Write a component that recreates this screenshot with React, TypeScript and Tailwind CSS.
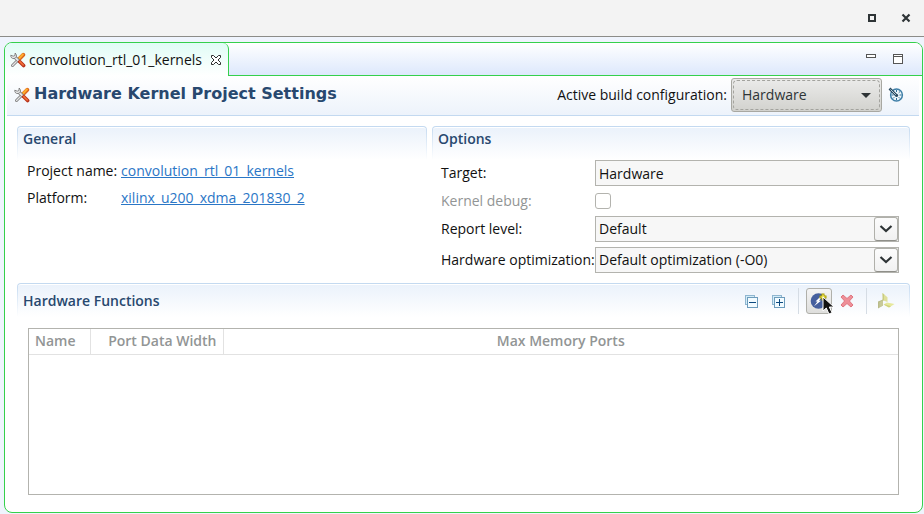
import React from "react";

function ToolsIcon() {
  return (
    <svg width="16" height="16" viewBox="0 0 16 16" className="shrink-0" aria-hidden="true">
      <path d="M2.500 13.500 8.500 7.500" stroke="#7a7a7a" strokeWidth="3" strokeLinecap="round" />
      <path d="M2.500 13.500 8.500 7.500" stroke="#e4e4e4" strokeWidth="1.400" strokeLinecap="round" />
      <path d="M9 7.200 13.200 2.800" stroke="#d9631c" strokeWidth="4" strokeLinecap="round" />
      <path d="M8.800 6.700 12.800 2.500" stroke="#ffac2e" strokeWidth="2.200" strokeLinecap="round" />
      <path d="M4.500 4.800 9.500 9.800" stroke="#7a7a7a" strokeWidth="3.400" />
      <path d="M4.200 4.500 9.500 9.800" stroke="#e6e6e6" strokeWidth="1.900" />
      <path d="M9.800 9.800 13.600 13.600" stroke="#b8321a" strokeWidth="3.600" strokeLinecap="round" />
      <path d="M9.800 9.600 13.200 13" stroke="#f4733a" strokeWidth="1.600" strokeLinecap="round" />
      <path d="M.8 3.200C.6 5.400 2 6.800 4 6.500 6 6.200 6.900 4.500 6.300 2.800L5.200 1 4.900 3.600 3.200 4.200z" fill="#ededed" stroke="#777" strokeWidth=".9" />
    </svg>
  );
}

function TabCloseIcon() {
  return (
    <svg width="12" height="12" viewBox="0 0 12 12" aria-hidden="true">
      <path d="M1.500 1.500h2L6 4l2.500-2.500h2v2L8 6l2.500 2.500v2h-2L6 8l-2.500 2.500h-2v-2L4 6 1.500 3.500z" fill="#fff" stroke="#2c2c2c" />
    </svg>
  );
}

function GaugeIcon() {
  return (
    <svg width="16" height="16" viewBox="0 0 16 16" aria-hidden="true">
      <circle cx="8.500" cy="8" r="5.900" fill="#eef6fa" stroke="#3f7fa8" strokeWidth="1.500" />
      <path d="M8.500 3v2M8.500 11v2M11.500 8h2M3.500 8h2M12 4.500l-1.300 1.300M12 11.500l-1.300-1.300M5 11.500l1.300-1.300" stroke="#2f6f98" />
      <path d="M1.500 1.500 9 9" stroke="#2a4a60" strokeWidth="2.600" />
      <path d="M2.500 2.500 8 8" stroke="#c8dbe6" strokeWidth=".9" />
      <circle cx="8.800" cy="8.600" r="1.400" fill="#2a4a60" />
    </svg>
  );
}

function TreeIcon({ plus }: { plus?: boolean }) {
  return (
    <svg width="13" height="13" viewBox="0 0 13 13" aria-hidden="true" shapeRendering="crispEdges">
      <path d="M.5.500h9v9h-9z" fill="#d3ecf8" stroke="#8fb6d0" />
      <path d="M2.500 2.500h10v10h-10z" fill="#f2fbff" stroke="#6d9cbc" />
      <path d="M4 7.500h7" stroke="#0c4a80" />
      {plus && <path d="M7.500 4v7" stroke="#0c4a80" />}
    </svg>
  );
}

function AddFunctionIcon() {
  return (
    <svg width="18" height="18" viewBox="0 0 18 18" aria-hidden="true">
      <circle cx="8.500" cy="9" r="7.800" fill="#455f9e" />
      <path d="M10.500 4.500 5.500 9.500h2L4 14.300 11 8.700H9L12 5z" fill="#fff" />
      <path d="M13 1.500v7M9.500 5h7" stroke="#a79a00" strokeWidth="3" />
      <path d="M13 2.500v5M10.500 5h5" stroke="#fff56b" strokeWidth="1.200" />
    </svg>
  );
}

function DeleteIcon() {
  return (
    <svg width="14" height="14" viewBox="0 0 14 14" aria-hidden="true">
      <path d="M1 3 3 1l4 3.500L11 1l2 2-3.600 4L13 11l-2 2-4-3.500L3 13l-2-2 3.600-4z" fill="#ee8f98" stroke="#df7680" strokeWidth="1" />
    </svg>
  );
}

function BinaryIcon() {
  return (
    <svg width="17" height="16" viewBox="0 0 17 16" aria-hidden="true">
      <path d="M4.500 0 9.500 4.200V9L5.500 7.500z" fill="#dfe09a" />
      <path d="M4.500 0 6 1.500v6.300L4.500 7z" fill="#c9cc82" />
      <path d="M0 8.500 5 6.500v6L0 15.500z" fill="#b9bb8a" />
      <path d="M1.500 9 5 7.500v4.800L1.500 14.500z" fill="#c8ca98" />
      <path d="M5.500 11.500 9 9.500 16.500 11 11 14.500z" fill="#e6e89c" />
      <path d="M5.500 11.500 11 14.500l2-1.300-5.500-1.700z" fill="#cfd27e" />
    </svg>
  );
}

function Pointer() {
  return (
    <svg width="14" height="20" viewBox="0 0 14 20" className="pointer-events-none absolute top-2 left-4 z-10" aria-hidden="true">
      <path d="M1 1v14l3.300-3 2.700 6 3-1.300-2.700-5.700H12z" fill="#111" stroke="#fff" />
    </svg>
  );
}

function Section({
  title,
  className = "",
  tools,
  children,
}: {
  title: string;
  className?: string;
  tools?: React.ReactNode;
  children: React.ReactNode;
}) {
  return (
    <section className={"relative flex min-w-0 flex-col " + className}>
      <div className="rounded-t bg-linear-to-b from-[#c3d9f0] to-white px-px pt-px">
        <header className="flex h-[33px] items-start justify-between rounded-t-[3px] border-t border-white bg-linear-to-b from-[#ebf2fb] to-white pl-[5px]">
          <h2 className={"text-[14px] font-semibold text-[#28486f] " + (tools ? "leading-8" : "leading-[22px]")}>{title}</h2>
          {tools}
        </header>
      </div>
      {children}
    </section>
  );
}

function Combo({ id, value }: { id: string; value: string }) {
  return (
    <div className="relative h-[26px] border border-[#b3b3ae] bg-[#f7f7f7]">
      <select id={id} defaultValue={value} className="h-full w-full appearance-none bg-transparent pl-[3px] outline-none">
        <option>{value}</option>
      </select>
      <span className="pointer-events-none absolute inset-y-0 right-0 flex w-6 items-center justify-center rounded-[3px] border border-[#b0b0aa] border-b-[#8f8f89] bg-linear-to-b from-[#fcfcfc] to-[#f1f1f1]">
        <svg width="14" height="8" viewBox="0 0 14 8" aria-hidden="true">
          <path d="m1.500 1 5.500 5 5.500-5" fill="none" stroke="#2e3436" strokeWidth="2.200" />
        </svg>
      </span>
    </div>
  );
}

const toolButton = "flex h-[26px] w-[27px] items-center justify-center";

export default function App() {
  return (
    <div className="flex min-h-screen flex-col bg-[#eff4fd] font-['Open_Sans','Noto_Sans',sans-serif] text-[14px] leading-5 text-[#111]">
      <div className="flex h-[37px] shrink-0 items-center justify-end gap-[25px] border-b border-[#8c8c88] bg-[#f3f3f3] pr-[13px]">
        <button type="button" aria-label="Maximize window" className="size-2 border-2 border-[#2e3436]" />
        <button type="button" aria-label="Close window">
          <svg width="10" height="10" viewBox="0 0 10 10" aria-hidden="true">
            <path d="m1.500 1.500 7 7m0-7-7 7" stroke="#2e3436" strokeWidth="2.200" />
          </svg>
        </button>
      </div>

      <main className="mt-[5px] mr-px mb-px ml-1 flex flex-1 flex-col overflow-hidden rounded-lg border border-[#35d04c] bg-white">
        <div className="flex h-[33px] shrink-0">
          <div className="flex w-[224px] items-center rounded-tr-md border-r border-[#35d04c] bg-linear-to-b from-[#e0fcf6] to-white pl-[5px]">
            <ToolsIcon />
            <span className="mr-2 ml-[3px] whitespace-nowrap">convolution_rtl_01_kernels</span>
            <button type="button" aria-label="Close tab">
              <TabCloseIcon />
            </button>
          </div>
          <div className="flex flex-1 items-start justify-end gap-[17px] border-b border-[#35d04c] bg-linear-to-b from-white to-[#dde8fc] pt-[11px] pr-[19px]">
            <button type="button" aria-label="Minimize view" className="h-1 w-2.5 border border-[#555] bg-white" />
            <button type="button" aria-label="Maximize view" className="flex size-2.5 flex-col border border-[#555] bg-white">
              <span className="mt-px h-px w-full bg-[#555]" />
            </button>
          </div>
        </div>

        <div className="mr-[3px] ml-0.5 flex h-10 shrink-0 items-center border-b border-[#c3d9f0] bg-linear-to-b from-white to-[#edf3fb] pr-[15px] pb-px pl-[7px]">
          <ToolsIcon />
          <h1 className="ml-1 flex-1 pb-0.5 font-['DejaVu_Sans',sans-serif] text-[16px] font-bold whitespace-nowrap text-[#28486f]">
            Hardware Kernel Project Settings
          </h1>
          <label htmlFor="build-config" className="mr-1 whitespace-nowrap">
            Active build configuration:
          </label>
          <div className="relative h-[34px] w-[151px] rounded-[3px] border border-[#a8a8a2] bg-linear-to-b from-[#ebebea] to-[#d2d2ce] p-px">
            <select
              id="build-config"
              defaultValue="Hardware"
              className="h-full w-full appearance-none rounded-sm border border-dashed border-[#a3a39e] bg-transparent pl-2 text-[#2e3436] outline-none"
            >
              <option>Hardware</option>
            </select>
            <svg width="10" height="5" viewBox="0 0 10 5" className="pointer-events-none absolute top-3.5 right-2.5" aria-hidden="true">
              <path d="M0 0h10L5 5z" fill="#2e3436" />
            </svg>
          </div>
          <button type="button" aria-label="Profile" className="ml-1.5">
            <GaugeIcon />
          </button>
        </div>

        <div className="flex flex-1 flex-col pt-2.5 pr-3 pl-3">
          <div className="flex h-[157px] shrink-0 gap-[5px]">
            <Section title="General" className="flex-[410]">
              <dl className="grid grid-cols-[88px_1fr] gap-x-1.5 gap-y-[7px] pt-px pl-2.5">
                <dt className="whitespace-nowrap">Project name:</dt>
                <dd>
                  <a href="#project" className="text-[#2a76c6] underline">convolution_rtl_01_kernels</a>
                </dd>
                <dt>Platform:</dt>
                <dd>
                  <a href="#platform" className="text-[#2a76c6] underline">xilinx_u200_xdma_201830_2</a>
                </dd>
              </dl>
            </Section>
            <Section title="Options" className="flex-[478]">
              <form className="grid grid-cols-[154px_1fr] items-center gap-y-[5px] pr-[11px] pl-[9px]">
                <label htmlFor="target">Target:</label>
                <input id="target" readOnly value="Hardware" className="h-[26px] w-full min-w-0 border border-[#b3b3ae] bg-[#f7f7f7] pl-[3px] outline-none" />
                <label htmlFor="debug" className="text-[#929595]">Kernel debug:</label>
                <input id="debug" type="checkbox" disabled className="size-4 appearance-none rounded-[3px] border border-[#b3b3ae] bg-white" />
                <label htmlFor="report">Report level:</label>
                <Combo id="report" value="Default" />
                <label htmlFor="optimization" className="whitespace-nowrap">Hardware optimization:</label>
                <Combo id="optimization" value="Default optimization (-O0)" />
              </form>
            </Section>
          </div>

          <Section
            title="Hardware Functions"
            className="flex-1 pb-[17px]"
            tools={
              <div className="mt-[3px] mr-2 flex items-center">
                <button type="button" aria-label="Collapse all" className={toolButton}>
                  <TreeIcon />
                </button>
                <button type="button" aria-label="Expand all" className={toolButton}>
                  <TreeIcon plus />
                </button>
                <span className="mr-[7px] ml-1.5 h-[26px] w-px bg-[#d5dce4]" />
                <div className="relative">
                  <button
                    type="button"
                    aria-label="Add hardware function"
                    className="flex size-[26px] items-center justify-center rounded-[3px] border border-[#b0b0aa] bg-linear-to-b from-[#f4f4f4] to-[#dededc]"
                  >
                    <AddFunctionIcon />
                  </button>
                  <Pointer />
                </div>
                <button type="button" aria-label="Remove hardware function" className="flex h-[26px] w-[30px] items-center justify-center">
                  <DeleteIcon />
                </button>
                <span className="mx-1 h-[26px] w-px bg-[#d5dce4]" />
                <button type="button" aria-label="Add binary container" className="flex h-[26px] w-[30px] items-center justify-center">
                  <BinaryIcon />
                </button>
              </div>
            }
          >
            <div className="mx-[11px] mt-[11px] flex-1 border border-[#b3b3ae] bg-white">
              <table className="w-full table-fixed border-collapse text-[#929595]">
                <thead>
                  <tr className="h-[25px] border-b border-[#e2e2e2]">
                    <th className="w-[61px] border-r border-[#e2e2e2] pl-1.5 text-left font-semibold">Name</th>
                    <th className="w-[133px] border-r border-[#e2e2e2] pr-1.5 text-right font-semibold whitespace-nowrap">Port Data Width</th>
                    <th className="text-center font-semibold">Max Memory Ports</th>
                  </tr>
                </thead>
              </table>
            </div>
          </Section>
        </div>
      </main>
    </div>
  );
}
